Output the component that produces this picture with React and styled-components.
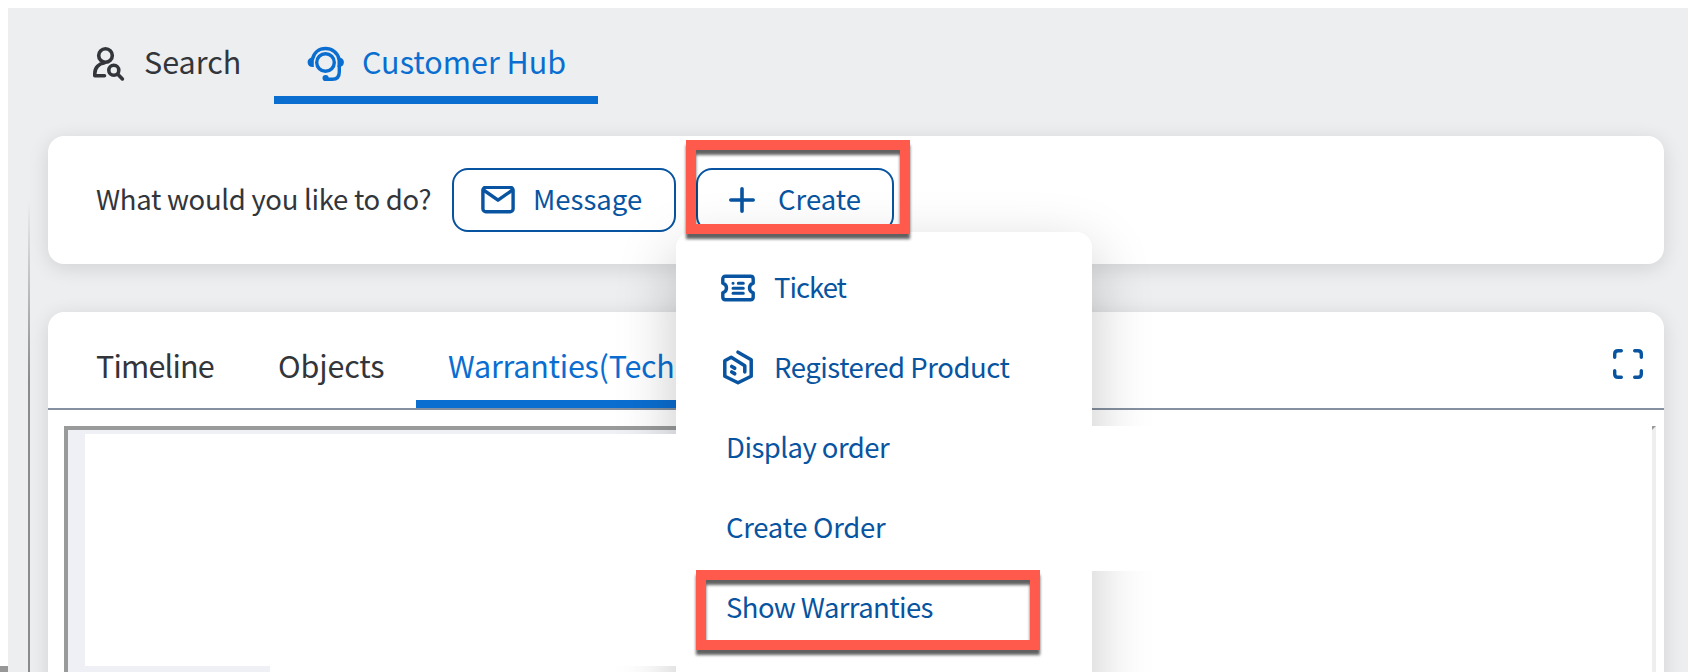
import React from "react";
import styled, { createGlobalStyle } from "styled-components";

const GlobalStyle = createGlobalStyle`
  * { box-sizing: border-box; }
  html, body { margin: 0; padding: 0; background: #fff; }
  body {
    width: 1688px;
    height: 672px;
    overflow: hidden;
    font-family: "Noto Sans CJK SC", "Noto Sans", sans-serif;
    color: #32363b;
  }
  svg { display: block; flex: none; }
`;

const Window = styled.div`
  position: relative;
  width: 1688px;
  height: 672px;
  padding: 8px 0 0 8px;
  overflow: hidden;
  background: #fff;
`;

const Page = styled.main`
  height: 664px;
  padding: 0 24px 0 40px;
  background: #edeef0;
`;

const EdgeBlock = styled.div`
  position: absolute;
  left: 0;
  bottom: 0;
  width: 8px;
  height: 6px;
  background: #979797;
`;

const SideRule = styled.div`
  position: absolute;
  left: 28px;
  top: 200px;
  bottom: 0;
  width: 2px;
  background: linear-gradient(#8b8b8b00, #8b8b8b 180px);
`;

const Label = styled.span`
  font-size: 27.5px;
  line-height: 40px;
  margin-bottom: 4px;
  letter-spacing: ${(p) => p.$spacing || 0}px;
  white-space: nowrap;
`;

const TabLabel = styled(Label)`
  font-size: 30.5px;
  margin-bottom: ${(p) => p.$raise || 0}px;
`;

const MainTabs = styled.nav`
  display: flex;
  height: 96px;
`;

const MainTab = styled.div`
  display: flex;
  align-items: center;
  gap: ${(p) => p.$gap}px;
  width: ${(p) => p.$width}px;
  padding: 23px 0 0 ${(p) => p.$indent}px;
  color: ${(p) => (p.$active ? "#0a6ed1" : "inherit")};
  border-bottom: 8px solid ${(p) => (p.$active ? "#0a6ed1" : "transparent")};
`;

const Card = styled.section`
  background: #fff;
  box-shadow: 0 4px 20px rgba(0, 0, 0, 0.12);
`;

const ActionCard = styled(Card)`
  display: flex;
  align-items: center;
  height: 128px;
  margin-top: 32px;
  padding-left: 48px;
  border-radius: 16px;
`;

const Prompt = styled.div`
  display: flex;
  width: 356px;
`;

const ActionButton = styled.button`
  display: flex;
  align-items: center;
  gap: ${(p) => p.$gap}px;
  width: ${(p) => p.$width}px;
  height: 64px;
  margin: 0 20px 0 0;
  padding: 0 0 0 ${(p) => p.$indent}px;
  border: 2px solid #0854a0;
  border-radius: 16px;
  background: #fff;
  color: #0854a0;
  font-family: inherit;
`;

const ContentCard = styled(Card)`
  height: 400px;
  margin-top: 48px;
  border-radius: 16px 16px 0 0;
`;

const ContentTabs = styled.nav`
  display: flex;
  height: 98px;
  padding-left: 16px;
  border-bottom: 2px solid #8591a0;
`;

const ContentTab = styled.div`
  display: flex;
  align-items: center;
  width: ${(p) => p.$width}px;
  padding: 18px 0 0 32px;
  color: ${(p) => (p.$active ? "#0a6ed1" : "inherit")};
  border-bottom: 8px solid ${(p) => (p.$active ? "#0a6ed1" : "transparent")};
`;

const ExpandButton = styled.div`
  margin: 36px 20px 0 auto;
  color: #0854a0;
`;

const Frame = styled.div`
  display: grid;
  grid-template-columns: 608px 416px 1fr;
  height: 300px;
  margin: 16px 8px 0 16px;
  border: 4px solid #999b9b;
  border-right-color: #eee;
  border-bottom-color: #eee;
`;

const LeftPane = styled.div`
  padding: 4px 0 0 17px;
  background: linear-gradient(90deg, #eff0f5 202px, transparent 202px),
    linear-gradient(#eff0f5 4px, #fff 4px);
`;

const Blank = styled.div`
  position: relative;
  z-index: 2;
  height: ${(p) => p.$height}px;
  margin-top: ${(p) => p.$lift || 0}px;
  background: #fff;
`;

const RightPane = styled.div`
  grid-column: 3;
`;

const MenuShadow = styled.div`
  position: absolute;
  z-index: 1;
  left: 676px;
  top: 232px;
  width: 416px;
  height: 560px;
  border-radius: 16px;
  box-shadow: 0 20px 60px rgba(0, 0, 0, 0.22);
`;

const Menu = styled.div`
  position: absolute;
  z-index: 3;
  left: 676px;
  top: 232px;
  width: 416px;
  height: 560px;
  padding-top: 16px;
  border-radius: 16px;
  background: #fff;
  color: #0854a0;
`;

const MenuItem = styled.div`
  display: flex;
  align-items: center;
  height: 80px;
  padding-left: ${(p) => (p.$icon ? 44 : 50)}px;
  gap: 18px;
`;

const Highlight = styled.div`
  position: absolute;
  z-index: 4;
  left: ${(p) => p.$x}px;
  top: ${(p) => p.$y}px;
  width: ${(p) => p.$w}px;
  height: ${(p) => p.$h}px;
  border: 10px solid #ff5a4c;
  filter: drop-shadow(0 5px 1.5px rgba(0, 0, 0, 0.62));
`;

const Stroke = ({ w, h, sw = 4, children }) => (
  <svg width={w} height={h} viewBox={`0 0 ${w} ${h}`} fill="none" stroke="currentColor" strokeWidth={sw} strokeLinecap="round" strokeLinejoin="round">
    {children}
  </svg>
);

const PersonSearchIcon = () => (
  <Stroke w={34} h={36} sw={3.6}>
    <circle cx="13.500" cy="9.500" r="6.800" />
    <path d="M12.500 29.700H2.800v-2.200C2.800 21.500 7 17.500 12 17" />
    <circle cx="21.800" cy="24.300" r="5" />
    <path d="M25.800 28.300l4.600 4.600" />
  </Stroke>
);

const HeadsetIcon = () => (
  <Stroke w={38} h={36} sw={3.4}>
    <circle cx="18.500" cy="16.500" r="8.800" />
    <path d="M5.500 13C7 6.500 12 2.500 18.500 2.500S30.500 6.500 32 13" />
    <path d="M32.300 20v6c0 4.500-2.500 7.300-7 7.300H20" />
    <path d="M6.800 11.500v9.500C3 21.500.6 19.500.6 16.300S3 11.300 6.800 11.500ZM30.500 11.500v9.500c4 .5 6.400-1.500 6.400-4.700s-2.400-5-6.400-4.800Z" fill="currentColor" stroke="none" />
    <circle cx="18.600" cy="32" r="3.100" fill="currentColor" stroke="none" />
  </Stroke>
);

const MailIcon = () => (
  <Stroke w={34} h={28} sw={3.4}>
    <rect x="1.900" y="1.200" width="30.200" height="24.600" rx="3" />
    <path d="M2.500 4L17 14.200 31.500 4" />
  </Stroke>
);

const PlusIcon = () => (
  <Stroke w={26} h={26} sw={3.6}>
    <path d="M13 1.800v22.400M1.800 13h22.400" />
  </Stroke>
);

const TicketIcon = () => (
  <Stroke w={36} h={28} sw={3.4}>
    <path d="M5.500 2.200h25c1.700 0 2.700 1 2.700 2.700v4.300c-2.400.9-3.700 2.500-3.700 4.800s1.300 3.900 3.700 4.800v4.300c0 1.700-1 2.700-2.700 2.700h-25c-1.700 0-2.700-1-2.700-2.700v-4.300c2.400-.9 3.700-2.500 3.700-4.800S5.200 10.100 2.800 9.200V4.900c0-1.700 1-2.700 2.700-2.700Z" />
    <path d="M13 9.200h.1M18.300 9.200h5M13 14.200h10.300M13 19.200h10.300" strokeWidth="3" />
  </Stroke>
);

const ProductIcon = () => (
  <Stroke w={36} h={36} sw={3.500}>
    <path d="M18 2.200L31.200 9.800v16.400L18 32.800 4.800 26.200V10.800L11.200 7.200l13.600 8.600v6.200" />
    <path d="M11.800 16.500l2.800 1.700M11.800 22l2.800 1.700" strokeWidth="3.800" />
  </Stroke>
);

const ExpandIcon = () => (
  <Stroke w={32} h={32} sw={3.400}>
    <path d="M2.700 9.300V6c0-2 1.300-3.300 3.300-3.300h3.300M22.700 2.700H26c2 0 3.300 1.300 3.300 3.300v3.300M29.300 22.700V26c0 2-1.300 3.300-3.300 3.300h-3.300M9.300 29.300H6c-2 0-3.300-1.300-3.300-3.300v-3.300" />
  </Stroke>
);

const MENU_ITEMS = [
  { label: "Ticket", icon: <TicketIcon />, spacing: -1 },
  { label: "Registered Product", icon: <ProductIcon />, spacing: -0.46 },
  { label: "Display order", spacing: -0.54 },
  { label: "Create Order", spacing: -0.3 },
  { label: "Show Warranties", spacing: -0.6 },
];

export default function App() {
  return (
    <Window>
      <GlobalStyle />
      <Page>
        <MainTabs>
          <MainTab $width={226} $indent={44} $gap={18}>
            <PersonSearchIcon />
            <TabLabel $raise={5}>Search</TabLabel>
          </MainTab>
          <MainTab $active $width={324} $indent={33} $gap={17}>
            <HeadsetIcon />
            <TabLabel $raise={5}>Customer Hub</TabLabel>
          </MainTab>
        </MainTabs>
        <ActionCard>
          <Prompt>
            <Label $spacing={-0.3}>What would you like to do?</Label>
          </Prompt>
          <ActionButton $width={224} $indent={27} $gap={18}>
            <MailIcon />
            <Label>Message</Label>
          </ActionButton>
          <ActionButton $width={198} $indent={31} $gap={23}>
            <PlusIcon />
            <Label>Create</Label>
          </ActionButton>
        </ActionCard>
        <ContentCard>
          <ContentTabs>
            <ContentTab $width={182}><TabLabel $spacing={-0.8}>Timeline</TabLabel></ContentTab>
            <ContentTab $width={170}><TabLabel $spacing={-0.15}>Objects</TabLabel></ContentTab>
            <ContentTab $active $width={420}><TabLabel $spacing={-0.25}>Warranties(Tech</TabLabel></ContentTab>
            <ExpandButton><ExpandIcon /></ExpandButton>
          </ContentTabs>
          <Frame>
            <LeftPane><Blank $height={232} /></LeftPane>
            <RightPane><Blank $height={145} $lift={-4} /></RightPane>
          </Frame>
        </ContentCard>
      </Page>
      <SideRule />
      <EdgeBlock />
      <MenuShadow />
      <Menu>
        {MENU_ITEMS.map((item) => (
          <MenuItem key={item.label} $icon={Boolean(item.icon)}>
            {item.icon}
            <Label $spacing={item.spacing}>{item.label}</Label>
          </MenuItem>
        ))}
      </Menu>
      <Highlight $x={686} $y={140} $w={224} $h={94} />
      <Highlight $x={696} $y={570} $w={344} $h={80} />
    </Window>
  );
}
